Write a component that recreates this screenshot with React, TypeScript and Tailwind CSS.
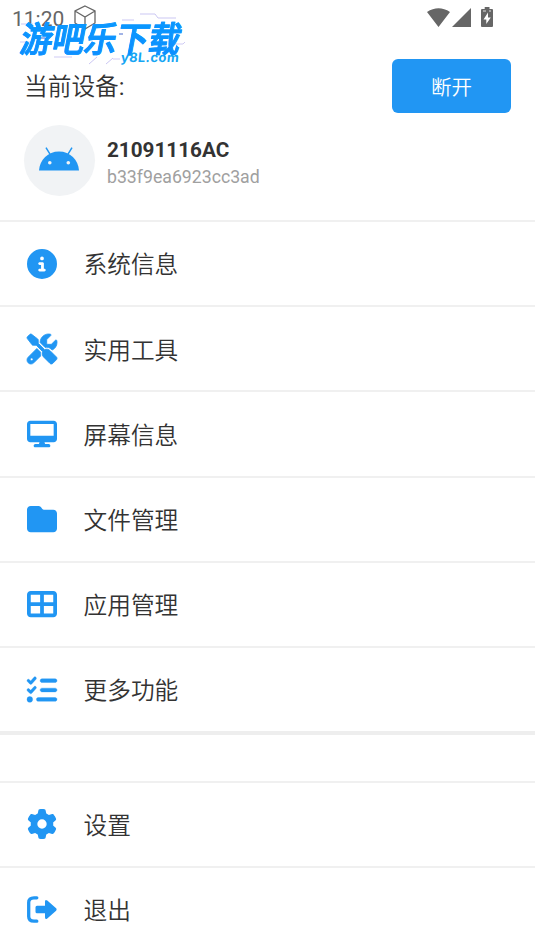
import React from "react";
import {
  FaCircleInfo,
  FaDesktop,
  FaFolder,
  FaGear,
  FaListCheck,
  FaScrewdriverWrench,
  FaTableCellsLarge,
} from "react-icons/fa6";

type RowProps = {
  icon: React.ReactNode;
  label: string;
};

const ExitIcon = () => (
  <svg viewBox="0 0 30 27" className="h-[27px] w-[30px]" fill="none">
    <path
      d="M9.800 1.800H7Q1.700 1.800 1.700 6.500v14q0 4.700 5.300 4.700h2.800"
      stroke="currentColor"
      strokeWidth="3.300"
      strokeLinecap="round"
    />
    <path
      d="M10 9.700h8V5.800q0-2.800 2.300-1.200l8.800 7.700q1 1.200 0 2.400l-8.800 7.700q-2.300 1.600-2.300-1.200v-3.900h-8q-1.500 0-1.500-1.500v-4.600q0-1.500 1.500-1.500z"
      fill="currentColor"
    />
  </svg>
);

const AndroidIcon = () => (
  <svg viewBox="0 0 40 24" className="mb-[2px] mr-[1px] h-6 w-10" fill="none">
    <path d="M0 23.5C.7 12.700 9 4.500 20 4.500S39.300 12.700 40 23.500z" fill="#2196f3" />
    <path d="M7 .7l4.300 7M33 .7l-4.300 7" stroke="#2196f3" strokeWidth="1.500" />
    <circle cx="10.800" cy="15.800" r="1.800" fill="#f1f3f5" />
    <circle cx="29.300" cy="15.800" r="1.800" fill="#f1f3f5" />
  </svg>
);

const Row = ({ icon, label }: RowProps) => (
  <div className="flex h-[85.2px] items-center border-t-2 border-[#f0f0f0] pl-[26.500px] text-[23.700px]">
    <span className="flex w-[30px] justify-center text-[30px] text-[#2196f3]">{icon}</span>
    <span className="ml-[27px] pt-[5px] font-[350]">{label}</span>
  </div>
);

const Watermark = () => (
  <div className="absolute left-[18px] top-[10px] h-[56px] w-[168px]">
    <svg viewBox="0 0 168 56" className="absolute inset-0" fill="none" strokeWidth="1">
      <path d="M122 4h15l3 4h18M104 10h12M3 14h12M88 54l7-6M71 54l8-7" stroke="#cbc7f3" />
      <path d="M2 32h12M3 42h9M36 47h18M95 49h7M156 34h9l2-2M160 21l3-5" stroke="#cfcbf4" />
      <path d="M22 28h5M101 24h4" stroke="#4568ce" />
    </svg>
    <p className="absolute left-[3px] top-[8px] origin-center -skew-x-12 scale-y-110 whitespace-nowrap bg-linear-to-b from-[#079bff] to-[#118aff] bg-clip-text text-[32px] font-medium leading-[44px] text-transparent [-webkit-text-stroke:.9px_#0b95ff]">
      游吧乐下载
    </p>
    <p className="absolute left-[103px] top-[39px] -skew-x-6 whitespace-nowrap font-['Inter'] text-[13px] font-bold leading-[16px] tracking-[.4px] text-[#16a6f4]">
      y8L.com
    </p>
  </div>
);

const App = () => {
  return (
    <div className="relative h-[951px] w-full overflow-hidden bg-white font-['Roboto','Noto_Sans_CJK_SC',sans-serif] text-[#333]">
      <header className="flex h-9 items-start justify-between pl-3 pr-10 pt-[6px] text-[#666]">
        <div className="flex items-start">
          <span className="w-[61px] text-[21px] leading-[26px]">11:20</span>
          <svg viewBox="0 0 24 26" className="-mt-px h-[26px] w-6" fill="none" stroke="currentColor" strokeWidth="1.300">
            <path d="M12 1l10 5v12l-10 6-10-6V6zM2 6l10 6 10-6M12 12v12" />
          </svg>
        </div>
        <svg viewBox="0 0 68 22" className="h-[22px] w-[68px]" fill="currentColor">
          <path d="M0 6Q11.500-1.500 23 6L11.500 21zM44 2v19H25z" />
          <path d="M57.700 1h4.800v2H65q1 0 1 1v16q0 1-1 1H55q-1 0-1-1V4q0-1 1-1h2.700z" />
          <path d="M61 6.500l-4.500 7h2.800V18l4.500-6.500H61z" fill="white" />
          <path d="M56 5h3M62 5h2" stroke="white" strokeWidth=".8" />
        </svg>
      </header>

      <section className="h-[184px] px-6 pt-[23px]">
        <div className="flex h-[54px] items-center justify-between">
          <h1 className="pt-[3px] text-[23.700px] font-[350]">
            当前设备<span className="font-normal">:</span>
          </h1>
          <button className="h-[54px] w-[119px] rounded-[6px] bg-[#2196f3] pt-[4px] text-[20.500px] font-[350] text-white">
            断开
          </button>
        </div>
        <div className="mt-[11.500px] flex items-center">
          <div className="flex size-[71px] items-center justify-center rounded-full bg-[#f1f3f5]">
            <AndroidIcon />
          </div>
          <div className="ml-[12px] pt-[6px]">
            <p className="text-[20.700px] font-bold leading-[27px]">21091116AC</p>
            <p className="text-[17.700px] leading-[26px] text-[#a0a0a0]">b33f9ea6923cc3ad</p>
          </div>
        </div>
      </section>

      <nav>
        <Row icon={<FaCircleInfo />} label="系统信息" />
        <Row icon={<FaScrewdriverWrench className="overflow-visible stroke-current [stroke-width:14px]" />} label="实用工具" />
        <Row icon={<FaDesktop />} label="屏幕信息" />
        <Row icon={<FaFolder />} label="文件管理" />
        <Row icon={<FaTableCellsLarge />} label="应用管理" />
        <Row icon={<FaListCheck className="overflow-visible stroke-current [stroke-width:6px]" />} label="更多功能" />
      </nav>
      <div className="h-[49.500px] border-t-4 border-[#eee]" />
      <nav>
        <Row icon={<FaGear />} label="设置" />
        <Row icon={<ExitIcon />} label="退出" />
      </nav>
      <Watermark />
    </div>
  );
};

export default App;
